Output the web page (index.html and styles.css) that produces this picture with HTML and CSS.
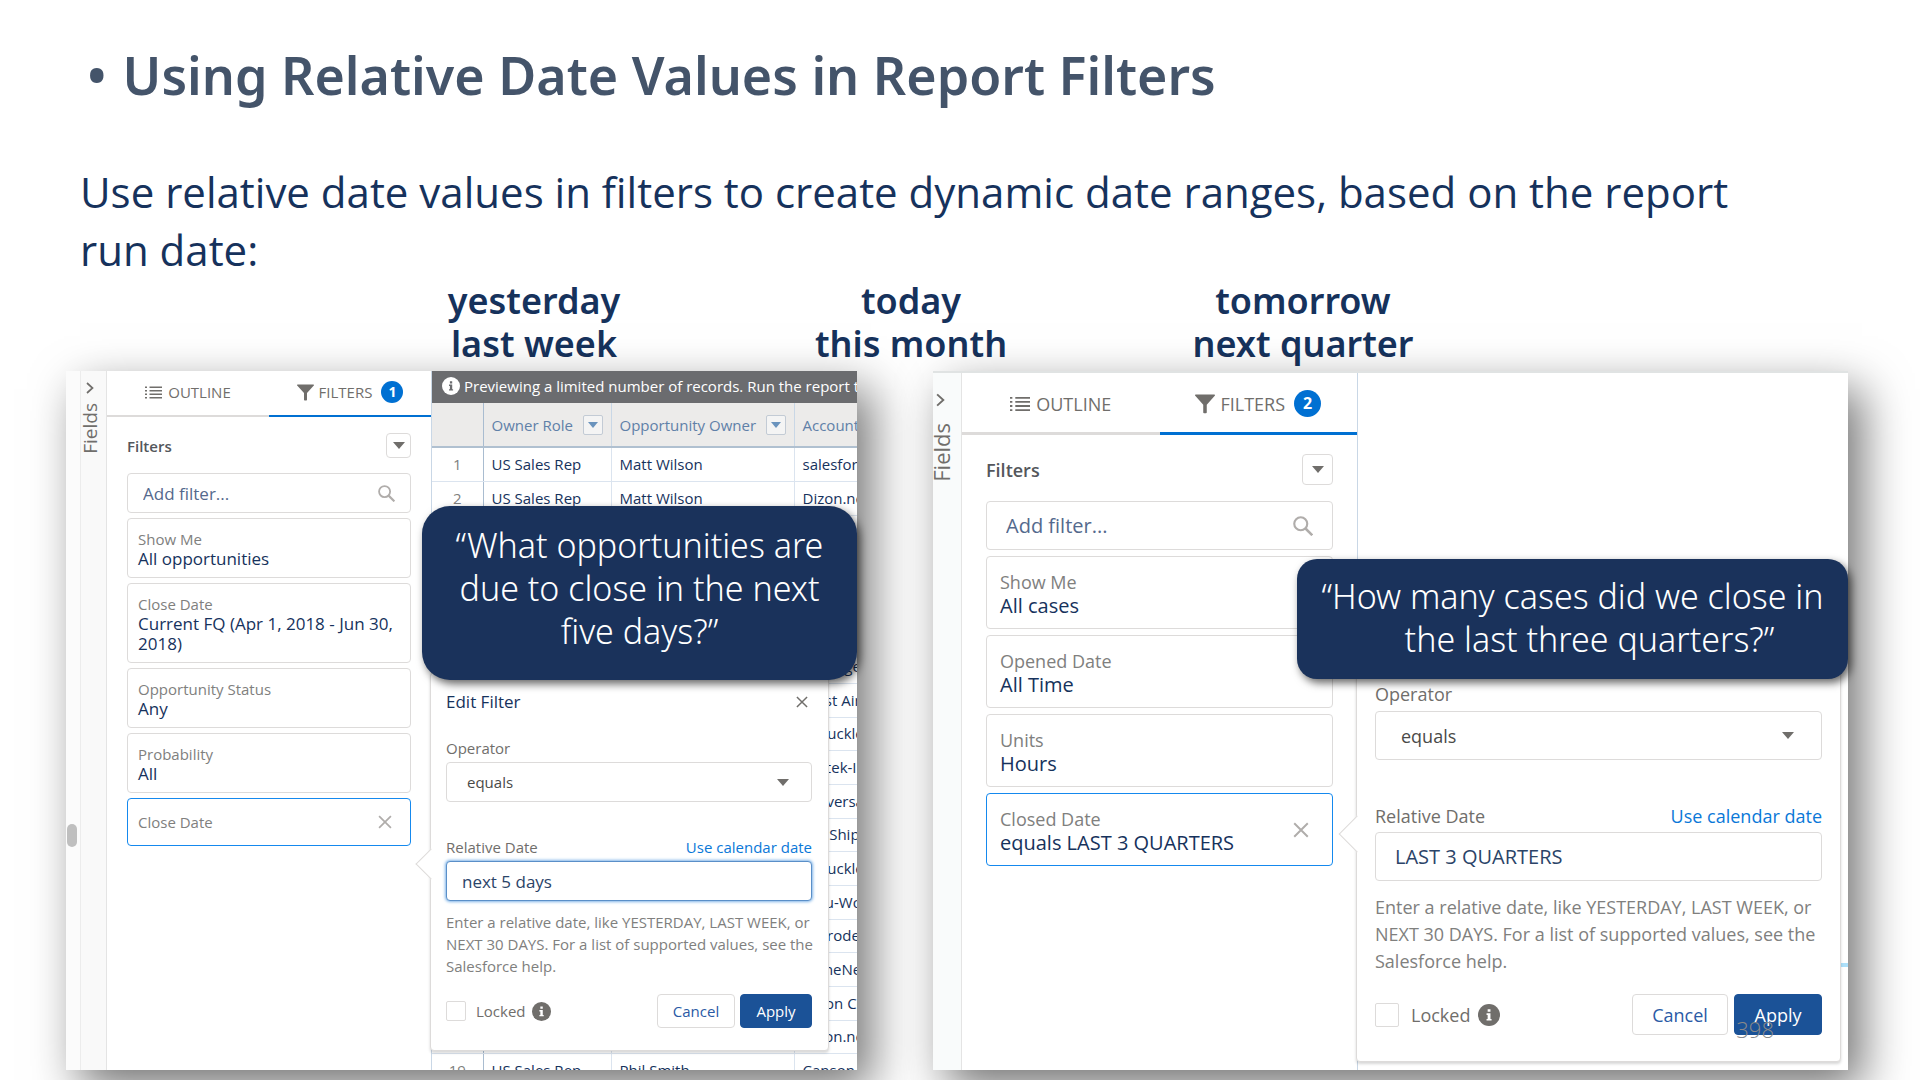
FILE: index.html
```html
<!DOCTYPE html>
<html lang="en">
<head>
  <meta charset="UTF-8" />
  <meta name="viewport" content="width=device-width, initial-scale=1" />
  <title>Using Relative Date Values in Report Filters</title>
  <link rel="stylesheet" href="styles.css">
</head>
<body>

  <!-- Shared icons -->
  <svg width="0" height="0" class="sprite" aria-hidden="true">
    <symbol id="i-list" viewBox="0 0 17 13">
      <path d="M0 1.2h2M0 4.7h2M0 8.2h2M0 11.7h2M4.5 1.2H17M4.5 4.7H17M4.5 8.2H17M4.5 11.7H17" stroke="currentColor" stroke-width="1.5" fill="none"/>
    </symbol>
    <symbol id="i-funnel" viewBox="0 0 17 16">
      <path d="M.6 0h15.8c.6 0 .8.6.4 1L10 8.600v6.600c0 .4-.3.7-.7.7H7.700c-.4 0-.7-.3-.7-.7V8.600L.2 1C-.2.6 0 0 .6 0z" fill="currentColor"/>
    </symbol>
    <symbol id="i-chevron" viewBox="0 0 8 12">
      <path d="M1 1l5.500 5L1 11" stroke="currentColor" stroke-width="1.700" fill="none"/>
    </symbol>
    <symbol id="i-search" viewBox="0 0 16 16">
      <circle cx="6.200" cy="6.200" r="5.200" stroke="currentColor" stroke-width="1.700" fill="none"/>
      <path d="M10 10l5.400 5.400" stroke="currentColor" stroke-width="2"/>
    </symbol>
    <symbol id="i-close" viewBox="0 0 13 13">
      <path d="M1 1l11 11M12 1L1 12" stroke="currentColor" stroke-width="1.600" fill="none"/>
    </symbol>
    <symbol id="i-info" viewBox="0 0 18 18">
      <circle cx="9" cy="9" r="9" fill="currentColor"/>
      <path d="M7.900 4.200h2.300v2.200H7.900zM7 7.500h3.200v4.700h.9v1.400H7v-1.400h.9V8.900H7z" fill="var(--mark, #fff)"/>
    </symbol>
  </svg>

  <header class="heading">
    <h1><span>•</span>Using Relative Date Values in Report Filters</h1>
    <p>Use relative date values in filters to create dynamic date ranges, based on the report run date:</p>
    <div class="terms">
      <div>yesterday<br>last week</div>
      <div>today<br>this month</div>
      <div>tomorrow<br>next quarter</div>
    </div>
  </header>

  <main class="panels">

    <!-- Opportunities report -->
    <section class="panel opportunities">
      <div class="panel-body">
        <div class="scroll"><span class="thumb"></span></div>
        <div class="fields">
          <svg class="chevron"><use href="#i-chevron"/></svg>
          <span>Fields</span>
        </div>
        <div class="sidebar">
          <nav class="tabs">
            <button><svg class="list"><use href="#i-list"/></svg>OUTLINE</button>
            <button class="active"><svg class="funnel"><use href="#i-funnel"/></svg>FILTERS<span class="badge">1</span></button>
          </nav>
          <div class="filters">
            <div class="filters-head">
              <h2>Filters</h2>
              <button class="menu" aria-label="Filter options"></button>
            </div>
            <div class="search">
              <input type="text" placeholder="Add filter..." aria-label="Add filter" />
              <svg><use href="#i-search"/></svg>
            </div>
            <div class="card"><span>Show Me</span><b>All opportunities</b></div>
            <div class="card"><span>Close Date</span><b>Current FQ (Apr 1, 2018 - Jun 30, 2018)</b></div>
            <div class="card"><span>Opportunity Status</span><b>Any</b></div>
            <div class="card"><span>Probability</span><b>All</b></div>
            <div class="card selected single"><span>Close Date</span>
              <button class="remove" aria-label="Remove"><svg><use href="#i-close"/></svg></button>
            </div>
          </div>
        </div>
        <div class="report">
          <div class="notice"><svg><use href="#i-info"/></svg>Previewing a limited number of records. Run the report t</div>
          <table>
            <thead>
              <tr>
                <th class="num"></th>
                <th class="role"><div>Owner Role<button aria-label="Sort"></button></div></th>
                <th class="owner"><div>Opportunity Owner<button aria-label="Sort"></button></div></th>
                <th><div>Account</div></th>
              </tr>
            </thead>
            <tbody>
              <tr><td>1</td><td>US Sales Rep</td><td>Matt Wilson</td><td>salesforce</td></tr>
              <tr><td>2</td><td>US Sales Rep</td><td>Matt Wilson</td><td>Dizon.net</td></tr>
              <tr><td></td><td></td><td></td><td></td></tr>
              <tr><td></td><td></td><td></td><td></td></tr>
              <tr><td></td><td></td><td></td><td></td></tr>
              <tr><td></td><td></td><td></td><td></td></tr>
              <tr><td></td><td></td><td></td><td>Burlinger</td></tr>
              <tr><td></td><td></td><td></td><td>West Air</td></tr>
              <tr><td></td><td></td><td></td><td>Arbuckle</td></tr>
              <tr><td></td><td></td><td></td><td>Amtek-Inc</td></tr>
              <tr><td></td><td></td><td></td><td>Universal</td></tr>
              <tr><td></td><td></td><td></td><td>Arc Ship</td></tr>
              <tr><td></td><td></td><td></td><td>Arbuckle</td></tr>
              <tr><td></td><td></td><td></td><td>Tofu-World</td></tr>
              <tr><td></td><td></td><td></td><td>Corrode</td></tr>
              <tr><td></td><td></td><td></td><td>AcmeNet</td></tr>
              <tr><td></td><td></td><td></td><td>Dixon Co</td></tr>
              <tr><td></td><td></td><td></td><td>Dizon.net</td></tr>
              <tr><td>19</td><td>US Sales Rep</td><td>Phil Smith</td><td>Canson</td></tr>
            </tbody>
          </table>
        </div>
      </div>

      <form class="popover">
        <div class="popover-head">
          <h3>Edit Filter</h3>
          <button type="button" class="close" aria-label="Close"><svg><use href="#i-close"/></svg></button>
        </div>
        <label for="op1">Operator</label>
        <div class="select"><select id="op1"><option>equals</option></select></div>
        <div class="row">
          <label for="date1">Relative Date</label>
          <a href="#">Use calendar date</a>
        </div>
        <input type="text" id="date1" class="date focused" value="next 5 days" />
        <p>Enter a relative date, like YESTERDAY, LAST WEEK, or NEXT 30 DAYS. For a list of supported values, see the Salesforce help.</p>
        <div class="actions">
          <input type="checkbox" id="lock1" />
          <label for="lock1">Locked</label>
          <svg class="info"><use href="#i-info"/></svg>
          <button type="button" class="cancel">Cancel</button>
          <button type="button" class="apply">Apply</button>
        </div>
      </form>

      <div class="callout">“What opportunities are<br>due to close in the next<br>five days?”</div>
    </section>

    <!-- Cases report -->
    <section class="panel cases">
      <div class="panel-body">
        <div class="fields">
          <svg class="chevron"><use href="#i-chevron"/></svg>
          <span>Fields</span>
        </div>
        <div class="sidebar">
          <nav class="tabs">
            <button><svg class="list"><use href="#i-list"/></svg>OUTLINE</button>
            <button class="active"><svg class="funnel"><use href="#i-funnel"/></svg>FILTERS<span class="badge">2</span></button>
          </nav>
          <div class="filters">
            <div class="filters-head">
              <h2>Filters</h2>
              <button class="menu" aria-label="Filter options"></button>
            </div>
            <div class="search">
              <input type="text" placeholder="Add filter..." aria-label="Add filter" />
              <svg><use href="#i-search"/></svg>
            </div>
            <div class="card"><span>Show Me</span><b>All cases</b></div>
            <div class="card"><span>Opened Date</span><b>All Time</b></div>
            <div class="card"><span>Units</span><b>Hours</b></div>
            <div class="card selected"><span>Closed Date</span><b>equals LAST 3 QUARTERS</b>
              <button class="remove" aria-label="Remove"><svg><use href="#i-close"/></svg></button>
            </div>
          </div>
        </div>
        <div class="report"><span class="chart-line"></span></div>
      </div>

      <form class="popover">
        <label for="op2">Operator</label>
        <div class="select"><select id="op2"><option>equals</option></select></div>
        <div class="row">
          <label for="date2">Relative Date</label>
          <a href="#">Use calendar date</a>
        </div>
        <input type="text" id="date2" class="date" value="LAST 3 QUARTERS" />
        <p>Enter a relative date, like YESTERDAY, LAST WEEK, or NEXT 30 DAYS. For a list of supported values, see the Salesforce help.</p>
        <div class="actions">
          <input type="checkbox" id="lock2" />
          <label for="lock2">Locked</label>
          <svg class="info"><use href="#i-info"/></svg>
          <button type="button" class="cancel">Cancel</button>
          <button type="button" class="apply">Apply</button>
        </div>
      </form>

      <div class="callout">“How many cases did we close in<br><span>the last three quarters?”</span></div>
      <div class="page-number">398</div>
    </section>

  </main>

</body>
</html>
```
FILE: styles.css
```css
* {
  box-sizing: border-box;
}

body {
  margin: 0;
  height: 100vh;
  display: flex;
  flex-direction: column;
  overflow: hidden;
  background: #fff;
  color: #16325c;
  font-family: "Open Sans", sans-serif;
}

.sprite {
  position: absolute;
}

button, input, select {
  font: inherit;
  color: inherit;
  margin: 0;
  padding: 0;
  background: #fff;
  border: none;
}

h1, h2, h3, p {
  margin: 0;
}

/* Heading */
.heading {
  padding: 45px 118px 0 80px;
}

h1 {
  display: flex;
  gap: 16px;
  margin-left: 7px;
  font-family: "Noto Sans", sans-serif;
  font-size: 52px;
  font-weight: 600;
  line-height: 60px;
  color: #44546a;
}

.heading p {
  margin-top: 58px;
  font-size: 42px;
  line-height: 58px;
}

.terms {
  display: grid;
  grid-template-columns: 378fr 376fr 408fr;
  margin: 0 295px 0 265px;
  font-family: "Noto Sans", sans-serif;
  font-size: 36px;
  font-weight: 600;
  line-height: 43px;
  text-align: center;
}

/* Panels */
.panels {
  flex: 1;
  min-height: 0;
  display: grid;
  grid-template-columns: minmax(0, 791fr) minmax(0, 915fr);
  grid-template-rows: minmax(0, 1fr);
  gap: 76px;
  padding: 6px 72px 10px 66px;
}

.panel {
  position: relative;
  display: flex;
  background: #fff;
  box-shadow: 14px 18px 44px rgba(0, 0, 0, 0.55);
}

.opportunities {
  --label: 15px;
  --value: 17px;
  --line: 20px;
  --help: 22px;
  --tabs: 46px;
  --menu: 25px;
  --control: 40px;
  --badge: 22px;
  --icon: 17px;
  --gap: 5px;
  --side: 20px;
  --check: 20px;
  --button: 34px;
}

.cases {
  --label: 18px;
  --value: 20px;
  --line: 24px;
  --help: 27px;
  --tabs: 62px;
  --menu: 31px;
  --control: 49px;
  --badge: 27px;
  --icon: 20px;
  --gap: 6px;
  --side: 24px;
  --check: 24px;
  --button: 41px;
}

.panel-body {
  flex: 1;
  min-width: 0;
  display: flex;
  overflow: hidden;
}

.cases .panel-body {
  border-top: 2px solid #e0e3e3;
}

.scroll {
  flex: none;
  width: 15px;
  padding: 453px 0 0 1px;
  background: #fbfbfb;
  border-right: 1px solid #ececec;
}

.thumb {
  display: block;
  width: 10px;
  height: 23px;
  border-radius: 5px;
  background: #bfbfbf;
}

.fields {
  flex: none;
  width: 26px;
  display: flex;
  flex-direction: column;
  align-items: center;
  gap: 9px;
  padding: 11px 8px 0 0;
  background: #f9f9f9;
  border-right: 1px solid #e4e4e4;
  color: #706e6b;
  font-size: 19px;
  line-height: 24px;
}

.fields span {
  writing-mode: vertical-rl;
  transform: rotate(180deg);
}

.chevron {
  flex: none;
  width: 8px;
  height: 12px;
}

.cases .fields {
  width: 29px;
  padding: 20px 13px 0 0;
  gap: 16px;
  background: #f9fbfb;
  font-size: 22px;
}

.cases .chevron {
  height: 14px;
  width: 9px;
}

.sidebar {
  flex: none;
  width: 324px;
}

.cases .sidebar {
  width: 395px;
}

.tabs {
  display: flex;
  height: var(--tabs);
}

.tabs button {
  flex: 1;
  display: flex;
  align-items: center;
  justify-content: center;
  gap: 6px;
  padding-bottom: 2px;
  border-bottom: 2px solid #dddbda;
  color: #706e6b;
  font-size: var(--label);
}

.tabs .active {
  gap: 5px;
  border-bottom-color: #0070d2;
}

.cases .tabs button {
  padding: 2px 0 0;
  border-bottom-width: 3px;
}

.list, .funnel {
  width: var(--icon);
  height: var(--icon);
}

.badge {
  width: var(--badge);
  margin-left: 4px;
  border-radius: 50%;
  background: #0070d2;
  color: #fff;
  font-size: 14px;
  font-weight: 700;
  line-height: var(--badge);
}

.cases .badge {
  font-size: 16px;
}

.filters {
  display: flex;
  flex-direction: column;
  gap: var(--gap);
  padding: 16px var(--side) 0;
}

.cases .filters {
  padding-top: 19px;
}

.filters-head {
  display: flex;
  align-items: center;
  justify-content: space-between;
  margin-bottom: 10px;
}

h2 {
  font-size: var(--label);
  font-weight: 600;
  line-height: var(--line);
  color: #54575c;
}

.menu {
  width: var(--menu);
  height: var(--menu);
  display: grid;
  place-items: center;
  border: 1px solid #dddbda;
  border-radius: 4px;
}

.menu::after, th button::after, .select::after {
  content: "";
  border: 6px solid transparent;
  border-top: 7px solid #706e6b;
  border-bottom: 0;
}

.search {
  display: flex;
  align-items: center;
  height: var(--control);
  padding: 0 15px;
  border: 1px solid #dddbda;
  border-radius: 4px;
}

.cases .search {
  padding: 0 19px;
}

.search input {
  flex: 1;
  min-width: 0;
  outline: none;
  font-size: var(--value);
}

.search input::placeholder {
  color: #54698d;
}

.search svg {
  width: var(--icon);
  height: var(--icon);
  color: #b0adab;
}

.card {
  position: relative;
  padding: 10px 10px 8px;
  border: 1px solid #dddbda;
  border-radius: 4px;
  line-height: var(--line);
}

.cases .card {
  padding: 13px 13px 10px;
}

.card span, .card b {
  display: block;
  font-weight: 400;
}

.card span {
  font-size: var(--label);
  color: #80807e;
}

.card b {
  font-size: var(--value);
}

.opportunities .single {
  padding: 13px 10px;
}

.card.selected {
  border-color: #1589ee;
}

.remove {
  position: absolute;
  top: 0;
  bottom: 0;
  right: 18px;
  background: none;
  color: #b0adab;
}

.remove svg {
  display: block;
  width: 14px;
  height: 14px;
}

.cases .remove {
  right: 23px;
}

.cases .remove svg {
  width: 16px;
  height: 16px;
}

/* Report preview */
.report {
  position: relative;
  flex: 1;
  min-width: 0;
  overflow: hidden;
  border-left: 1px solid #c9d7e6;
}

.notice {
  --mark: #6b6c6f;
  display: flex;
  align-items: center;
  gap: 4px;
  height: 32px;
  padding: 0 0 2px 10px;
  background: #6b6c6f;
  color: #fff;
  font-size: 15px;
  white-space: nowrap;
}

.notice svg {
  flex: none;
  width: 18px;
  height: 18px;
}

table {
  width: 600px;
  table-layout: fixed;
  border-collapse: collapse;
  font-size: 15px;
  line-height: 20px;
  white-space: nowrap;
}

th {
  height: 44px;
  padding: 0 8px;
  background: #ecebea;
  border-right: 1px solid #c9d7e6;
  border-bottom: 2px solid #b0c0d0;
  color: #6080a8;
  font-weight: 400;
}

th div {
  display: flex;
  align-items: center;
  justify-content: space-between;
}

th button {
  width: 20px;
  height: 20px;
  display: grid;
  place-items: center;
  background: #f4f4f4;
  border: 1px solid #c3cbd5;
  border-radius: 2px;
}

th button::after {
  border-width: 6px 5px 0;
  border-top-color: #6a93bd;
}

.num {
  width: 51px;
}

.role {
  width: 128px;
}

.owner {
  width: 183px;
}

td {
  height: 34px;
  padding: 0 8px 1px;
  border-right: 1px solid #dbe4ef;
  border-bottom: 1px solid #dbe4ef;
}

tr:nth-child(3n) td {
  height: 33px;
}

th:first-child, td:first-child {
  border-right: 1px solid #a9bcd0;
}

td:first-child {
  color: #80807e;
  text-align: center;
}

.chart-line {
  position: absolute;
  right: 0;
  bottom: 103px;
  width: 20px;
  height: 4px;
  background: #ade0fa;
}

/* Edit popover */
.popover {
  position: absolute;
  top: 301px;
  left: 364px;
  right: 28px;
  padding: 19px 16px 22px 15px;
  background: #fff;
  border: 1px solid #dddbda;
  border-radius: 4px;
  box-shadow: 0 2px 3px rgba(0, 0, 0, 0.16);
  color: #706e6b;
  font-size: var(--label);
  line-height: var(--line);
}

.cases .popover {
  top: 286px;
  left: 423px;
  right: 7px;
  padding: 24px 18px 26px;
}

.popover::before {
  content: "";
  position: absolute;
  top: 180px;
  left: -11px;
  width: 21px;
  height: 21px;
  background: #fff;
  border-left: 1px solid #dddbda;
  border-bottom: 1px solid #dddbda;
  transform: rotate(45deg);
}

.cases .popover::before {
  top: 163px;
  left: -13px;
  width: 25px;
  height: 25px;
}

.popover-head {
  display: flex;
  align-items: center;
  justify-content: space-between;
  margin-bottom: 26px;
  padding-right: 4px;
}

h3 {
  font-size: 17px;
  font-weight: 400;
  color: #16325c;
}

.close svg {
  display: block;
  width: 12px;
  height: 12px;
}

.popover > label {
  display: block;
  margin-bottom: 4px;
}

.cases .popover > label {
  margin-bottom: 5px;
}

.select {
  position: relative;
  display: flex;
  align-items: center;
  height: var(--control);
  margin-bottom: 35px;
  border: 1px solid #dddbda;
  border-radius: 4px;
}

.cases .select {
  margin-bottom: 44px;
}

select {
  flex: 1;
  height: 100%;
  padding-left: 20px;
  appearance: none;
  background: none;
  color: #4a4a48;
}

.cases select {
  padding-left: 25px;
}

.select::after {
  margin-right: 22px;
}

.cases .select::after {
  margin-right: 27px;
}

.row {
  display: flex;
  justify-content: space-between;
  margin-bottom: 4px;
}

a {
  color: #0a78d8;
  text-decoration: none;
}

.date {
  position: relative;
  display: block;
  width: 100%;
  height: var(--control);
  padding: 0 15px;
  border: 1px solid #dddbda;
  border-radius: 4px;
  outline: none;
  color: #2b4468;
  font-size: var(--value);
}

.cases .date {
  padding: 0 19px;
}

.focused {
  border-color: #5a8fc8;
  box-shadow: 0 0 3px 1px #7fb4e8;
}

.popover p {
  margin: 10px -8px 0 0;
  color: #80807e;
  line-height: var(--help);
}

.cases .popover p {
  margin-top: 13px;
}

.actions {
  display: flex;
  align-items: center;
  margin-top: 17px;
}

.cases .actions {
  margin-top: 19px;
}

.actions input {
  appearance: none;
  width: var(--check);
  height: var(--check);
  margin-right: 10px;
  border: 1px solid #dddbda;
  border-radius: 2px;
}

.cases .actions input {
  margin-right: 12px;
}

.info {
  width: 19px;
  height: 19px;
  margin: 0 auto 0 6px;
}

.cases .info {
  width: 22px;
  height: 22px;
  margin-left: 8px;
}

.actions button {
  width: 78px;
  height: var(--button);
  border: 1px solid #dddbda;
  border-radius: 4px;
  color: #2a5aa5;
}

.cases .cancel {
  width: 96px;
}

.actions .apply {
  width: 72px;
  margin-left: 5px;
  background: #1b5297;
  border-color: #1b5297;
  color: #fff;
}

.cases .actions .apply {
  width: 88px;
  margin-left: 6px;
}

/* Callouts */
.callout {
  position: absolute;
  top: 135px;
  left: 356px;
  right: 0;
  padding: 18px 0 27px;
  border-radius: 28px;
  background: #1a325b;
  box-shadow: 3px 4px 8px rgba(0, 0, 0, 0.6);
  color: #fff;
  font-family: "Noto Sans", sans-serif;
  font-size: 34px;
  font-weight: 300;
  line-height: 43px;
  text-align: center;
}

.cases .callout {
  top: 188px;
  left: 364px;
  padding: 16px 0 18px;
  border-radius: 20px;
}

.callout span {
  padding-left: 34px;
}

.page-number {
  position: absolute;
  right: 74px;
  bottom: 28px;
  color: #898989;
  font-size: 22px;
  font-weight: 300;
  line-height: 26px;
}
```
